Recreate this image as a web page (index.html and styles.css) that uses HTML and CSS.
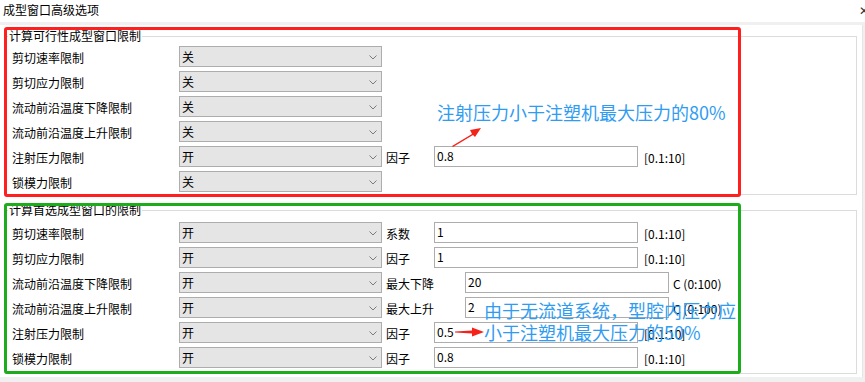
FILE: index.html
```html
<!DOCTYPE html>
<html lang="zh-CN">
<head>
    <meta charset="UTF-8">
    <title>成型窗口高级选项</title>
    <link rel="stylesheet" href="styles.css">
</head>
<body>

    <div class="window">
        <div class="titlebar">
            <span class="title">成型窗口高级选项</span>
            <span class="close">✕</span>
        </div>

        <div class="panel">
            <!-- 可行性成型窗口 -->
            <fieldset class="group">
                <legend>计算可行性成型窗口限制</legend>
                <div class="rows">
                    <div class="row">
                        <span class="label">剪切速率限制</span>
                        <div class="combo"><span>关</span><svg class="chev" width="8" height="5" viewBox="0 0 8 5"><path d="M0.5 0.5 L4 4 L7.5 0.5" /></svg></div>
                    </div>
                    <div class="row">
                        <span class="label">剪切应力限制</span>
                        <div class="combo"><span>关</span><svg class="chev" width="8" height="5" viewBox="0 0 8 5"><path d="M0.5 0.5 L4 4 L7.5 0.5" /></svg></div>
                    </div>
                    <div class="row">
                        <span class="label">流动前沿温度下降限制</span>
                        <div class="combo"><span>关</span><svg class="chev" width="8" height="5" viewBox="0 0 8 5"><path d="M0.5 0.5 L4 4 L7.5 0.5" /></svg></div>
                    </div>
                    <div class="row">
                        <span class="label">流动前沿温度上升限制</span>
                        <div class="combo"><span>关</span><svg class="chev" width="8" height="5" viewBox="0 0 8 5"><path d="M0.5 0.5 L4 4 L7.5 0.5" /></svg></div>
                    </div>
                    <div class="row">
                        <span class="label">注射压力限制</span>
                        <div class="combo"><span>开</span><svg class="chev" width="8" height="5" viewBox="0 0 8 5"><path d="M0.5 0.5 L4 4 L7.5 0.5" /></svg></div>
                        <span class="param">因子</span>
                        <span class="field">0.8</span>
                        <span class="range">[0.1:10]</span>
                    </div>
                    <div class="row">
                        <span class="label">锁模力限制</span>
                        <div class="combo"><span>关</span><svg class="chev" width="8" height="5" viewBox="0 0 8 5"><path d="M0.5 0.5 L4 4 L7.5 0.5" /></svg></div>
                    </div>
                </div>
            </fieldset>

            <!-- 首选成型窗口 -->
            <fieldset class="group second">
                <legend>计算首选成型窗口的限制</legend>
                <div class="rows">
                    <div class="row">
                        <span class="label">剪切速率限制</span>
                        <div class="combo"><span>开</span><svg class="chev" width="8" height="5" viewBox="0 0 8 5"><path d="M0.5 0.5 L4 4 L7.5 0.5" /></svg></div>
                        <span class="param">系数</span>
                        <span class="field">1</span>
                        <span class="range">[0.1:10]</span>
                    </div>
                    <div class="row">
                        <span class="label">剪切应力限制</span>
                        <div class="combo"><span>开</span><svg class="chev" width="8" height="5" viewBox="0 0 8 5"><path d="M0.5 0.5 L4 4 L7.5 0.5" /></svg></div>
                        <span class="param">因子</span>
                        <span class="field">1</span>
                        <span class="range">[0.1:10]</span>
                    </div>
                    <div class="row">
                        <span class="label">流动前沿温度下降限制</span>
                        <div class="combo"><span>开</span><svg class="chev" width="8" height="5" viewBox="0 0 8 5"><path d="M0.5 0.5 L4 4 L7.5 0.5" /></svg></div>
                        <span class="param wide">最大下降</span>
                        <span class="field">20</span>
                        <span class="range near">C (0:100)</span>
                    </div>
                    <div class="row">
                        <span class="label">流动前沿温度上升限制</span>
                        <div class="combo"><span>开</span><svg class="chev" width="8" height="5" viewBox="0 0 8 5"><path d="M0.5 0.5 L4 4 L7.5 0.5" /></svg></div>
                        <span class="param wide">最大上升</span>
                        <span class="field">2</span>
                        <span class="range near">C (0:100)</span>
                    </div>
                    <div class="row">
                        <span class="label">注射压力限制</span>
                        <div class="combo"><span>开</span><svg class="chev" width="8" height="5" viewBox="0 0 8 5"><path d="M0.5 0.5 L4 4 L7.5 0.5" /></svg></div>
                        <span class="param">因子</span>
                        <span class="field">0.5</span>
                        <span class="range">[0.1:10]</span>
                    </div>
                    <div class="row">
                        <span class="label">锁模力限制</span>
                        <div class="combo"><span>开</span><svg class="chev" width="8" height="5" viewBox="0 0 8 5"><path d="M0.5 0.5 L4 4 L7.5 0.5" /></svg></div>
                        <span class="param">因子</span>
                        <span class="field">0.8</span>
                        <span class="range">[0.1:10]</span>
                    </div>
                </div>
            </fieldset>
        </div>
    </div>

    <!-- annotations drawn over the dialog -->
    <div class="mark red-box"></div>
    <div class="mark green-box"></div>
    <div class="note note-1">注射压力小于注塑机最大压力的80%</div>
    <div class="note note-2">由于无流道系统，型腔内压力应<br>小于注塑机最大压力的50%</div>
    <svg class="arrows" width="865" height="382" viewBox="0 0 865 382">
        <path d="M452 146 L472 134 L470 130 L481 128 L475 137 L473 135 L453 147 Z" fill="#f5221b" />
        <path d="M455 331.5 L472 330.5 L472 327.5 L484 332 L472 336.5 L472 333.5 L455 332.5 Z" fill="#f5221b" />
    </svg>

</body>
</html>
```

FILE: styles.css
```css
body {
    margin: 0;
    background-color: #f0f0f0;
    font-family: "Noto Sans CJK SC", "Microsoft YaHei", sans-serif;
    font-size: 12px;
    color: #000;
    width: 865px;
    height: 382px;
    overflow: hidden;
    position: relative;
}
.titlebar {
    height: 22px;
    background: #fff;
    display: flex;
    justify-content: space-between;
    align-items: center;
}
.title {
    padding-left: 3px;
    line-height: 20px;
    margin-top: -2px;
}
.close {
    font-size: 12px;
    color: #333;
    margin-right: -4px;
    margin-top: -4px;
}
.panel {
    margin-top: 3px;
    width: 862px;
    background: #fff;
    border-right: 1px solid #e6e6e6;
    padding: 3px 0 3px;
}
.group {
    margin: 0 5px;
    padding: 2px 0 2px 6px;
    border: 1px solid #dcdcdc;
    min-width: 0;
}
.group.second {
    margin-top: 7px;
    padding-top: 4px;
    padding-bottom: 5px;
}
.group legend {
    padding: 0 1px;
    margin-left: -4px;
    line-height: 16px;
}
.rows {
    display: grid;
    gap: 4px;
}
.row {
    display: flex;
    align-items: center;
    height: 21px;
    line-height: 19px;
}
.label, .param, .range {
    padding-top: 2px;
}
.label {
    width: 167px;
    flex: none;
}
.combo {
    width: 203px;
    height: 21px;
    box-sizing: border-box;
    border: 1px solid #adadad;
    background: #e5e5e5;
    padding: 1px 0 0 2px;
    display: flex;
    align-items: center;
    justify-content: space-between;
    line-height: 18px;
    flex: none;
}
.chev {
    margin-right: 4px;
    fill: none;
    stroke: #7a7a7a;
    stroke-width: 1;
}
.param {
    width: 48px;
    margin-left: 4px;
    flex: none;
}
.param.wide {
    width: 79px;
}
.field {
    width: 204px;
    height: 21px;
    box-sizing: border-box;
    border: 1px solid #adadad;
    background: #fff;
    padding-left: 2px;
    line-height: 17px;
    flex: none;
}
.range {
    margin-left: 6px;
}
.range.near {
    margin-left: 4px;
}
.mark {
    position: absolute;
    box-sizing: border-box;
    border-radius: 3px;
    border: 3px solid #ff1f1f;
}
.red-box {
    left: 4px;
    top: 27px;
    width: 737px;
    height: 170px;
}
.green-box {
    left: 4px;
    top: 203px;
    width: 737px;
    height: 171px;
    border-color: #1cac1c;
}
.note {
    position: absolute;
    color: #2f9cf2;
    font-size: 18px;
    line-height: 22px;
    white-space: nowrap;
}
.note-1 {
    left: 437px;
    top: 101px;
}
.note-2 {
    left: 484px;
    top: 299px;
}
.arrows {
    position: absolute;
    left: 0;
    top: 0;
}
```
